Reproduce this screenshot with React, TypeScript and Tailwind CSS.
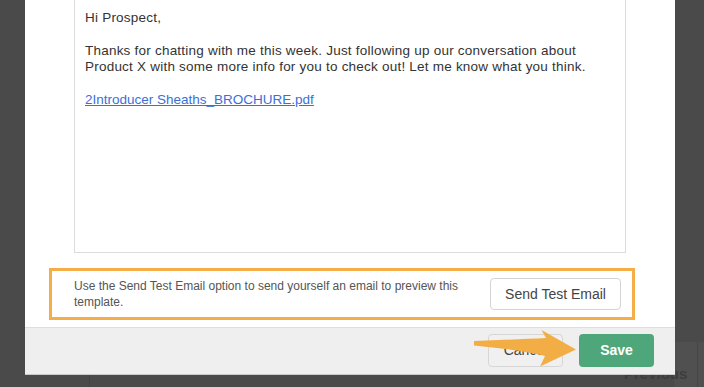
import React from "react";

export default function App() {
  return (
    <div className="relative w-[704px] h-[387px] overflow-hidden bg-[#4a4a4a] [font-family:'Liberation_Sans',Arial,sans-serif]">
      {/* background page details */}
      <div className="absolute left-[89px] top-[370px] w-px h-[20px] bg-[#424242]" />
      <div className="absolute left-[674px] top-[342px] w-[30px] h-[45px] bg-[#505050]" />
      <div className="absolute left-[697px] top-[342px] w-px h-[45px] bg-[#454545]" />
      <div className="absolute left-[624px] top-[363px] text-[15px] font-bold text-[#3d3d3d]">Previous</div>

      {/* modal */}
      <div className="absolute left-[25px] top-0 w-[650px] h-[375px] bg-white flex flex-col border-b border-[#c9c9c9]">
        <div className="ml-[49px] w-[552px] h-[253px] border border-t-0 border-[#dcdcdc] pt-[10px] pl-[10px] text-[13.5px] leading-[16.5px] text-[#333] tracking-[0.22px]">
          <p className="mb-[16px]">Hi Prospect,</p>
          <p className="mb-[16px]">
            Thanks for chatting with me this week. Just following up our conversation about
            <br />
            Product X with some more info for you to check out! Let me know what you think.
          </p>
          <p>
            <span className="text-[#3a6fd8] underline decoration-[#3a6fd8] tracking-normal">2Introducer Sheaths_BROCHURE.pdf</span>
          </p>
        </div>

        <div className="mt-[15px] ml-[24px] w-[586px] h-[52px] border-[3px] border-[#f4ad47] flex items-center justify-between pl-[22px] pr-[11px]">
          <p className="text-[12px] leading-[15.7px] text-[#555] w-[400px] pt-px">
            Use the Send Test Email option to send yourself an email to preview this template.
          </p>
          <button className="w-[131px] h-[32px] rounded-[4px] border border-[#d4d4d4] bg-white text-[14px] text-[#444]">
            Send Test Email
          </button>
        </div>

        <div className="mt-[7px] flex-1 bg-[#efefef] border-t border-[#dedede] flex items-start justify-end gap-[16px] pt-[6px] pr-[21px]">
          <button className="w-[75px] h-[33px] rounded-[4px] border border-[#d6d6d6] bg-[#f0f0f0] text-[14px] text-[#444]">
            Cancel
          </button>
          <button className="w-[75px] h-[33px] rounded-[4px] bg-[#4ea77b] text-[14px] font-semibold text-white">
            Save
          </button>
        </div>
      </div>

      {/* annotation arrow */}
      <svg className="absolute left-0 top-0" width="704" height="387" viewBox="0 0 704 387">
        <path
          d="M474 341 C500 340 525 339 546 338 L541.5 330 L576 349.5 L540 366.5 L545 356 C525 351 500 348 474 345.5 Z"
          fill="#f3ad45"
        />
      </svg>
    </div>
  );
}
